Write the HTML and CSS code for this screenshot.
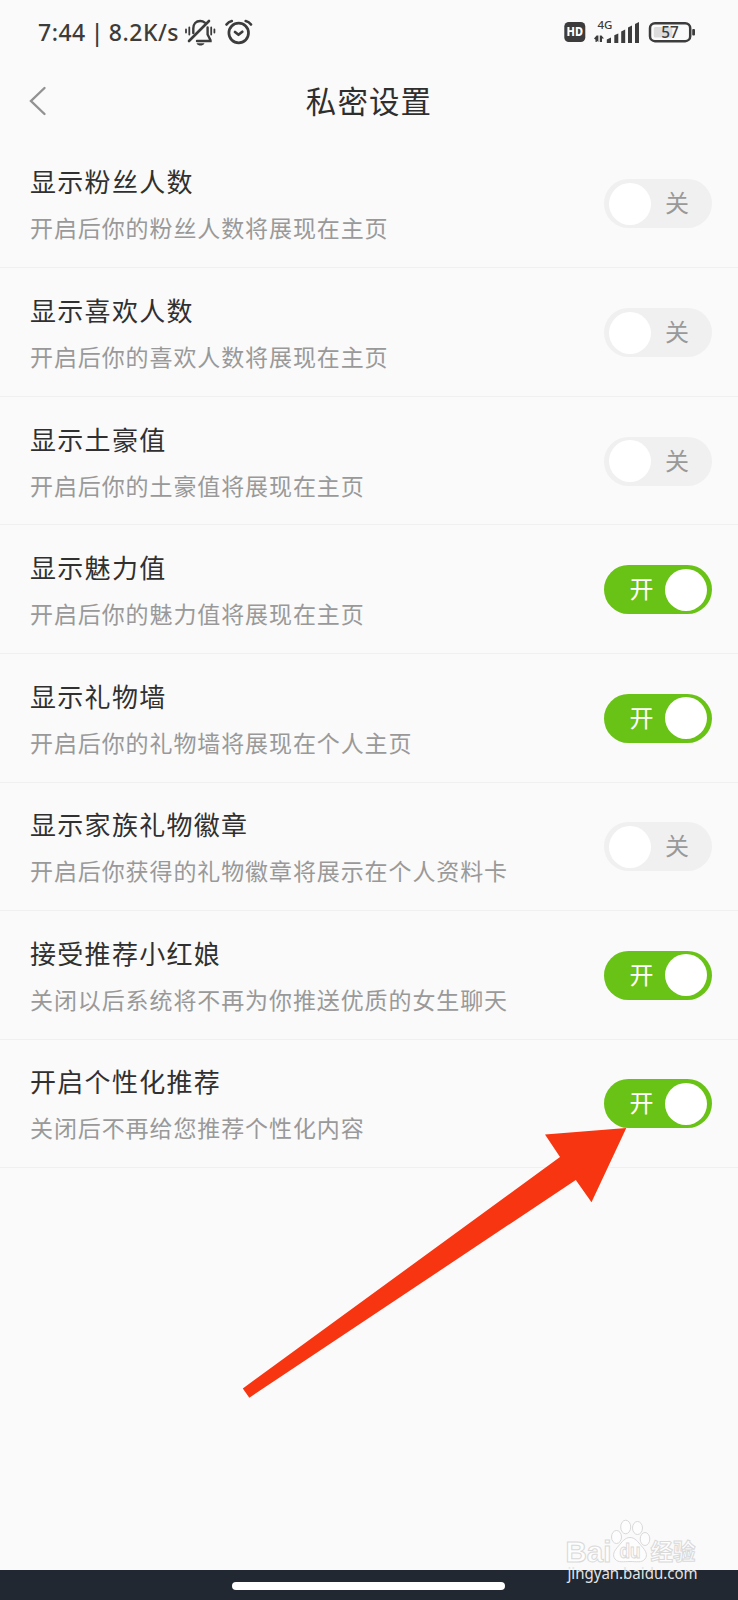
FILE: index.html
```html
<!DOCTYPE html>
<html lang="zh-CN">

<head>
    <meta charset="UTF-8">
    <meta name="viewport" content="width=device-width, initial-scale=1.0">
    <title>私密设置</title>
    <link rel="stylesheet" href="styles.css">
</head>

<body>
    <div class="phone">
        <!-- 状态栏 -->
        <div class="status">
            <span class="time">7:44 | 8.2K/s</span>
            <svg class="status-left" width="70" height="30" viewBox="184 18 70 30">
                <!-- 静音铃铛 -->
                <g fill="none" stroke="#3c3c3c" stroke-width="2.4" stroke-linecap="round">
                    <path d="M193.300 33V28.500C193.300 24 196 21 200.200 21C202 21 203.500 21.500 204.800 22.600"></path>
                    <path d="M207.600 27.500V34.500L210.500 40.200V41H197"></path>
                    <path d="M189 41L209 21" stroke-width="2.600"></path>
                    <path d="M186 29.500V32.500M189.300 27.500V34.500M211.200 27.500V34.500M214.400 29.500V32.500" stroke-width="1.800"></path>
                </g>
                <path d="M196.500 43.200H204.500C203.500 45 202 45.600 200.500 45.600C199 45.600 197.500 45 196.500 43.200Z" fill="#3c3c3c"></path>
                <!-- 闹钟 -->
                <g fill="none" stroke="#3c3c3c" stroke-width="2.700" stroke-linecap="round" stroke-linejoin="round">
                    <circle cx="238.700" cy="33" r="9.800"></circle>
                    <path d="M235 32L238.500 34.800L242.300 31.800"></path>
                    <path d="M226.500 24.500Q228.500 21.800 231.800 21M251 24.500Q249 21.800 245.700 21"></path>
                </g>
            </svg>
            <svg class="status-right" width="132" height="30" viewBox="564 18 132 30">
                <rect x="564.300" y="22" width="21" height="20" rx="4.500" fill="#3c3c3c"></rect>
                <text class="hd" x="566.500" y="36" textLength="16.500" lengthAdjust="spacingAndGlyphs">HD</text>
                <text class="net" x="597.500" y="29" textLength="15" lengthAdjust="spacingAndGlyphs">4G</text>
                <g fill="#3c3c3c">
                    <path d="M594 38.500L596.800 35.500V42H595.500V38.500ZM596.600 35.500H598.400V42L594 38.500Z"></path>
                    <path d="M599.800 35.500H601.500L604 38.500H602V42H599.800Z"></path>
                    <path d="M606.800 39.500L611 37.500V43H606.800Z"></path>
                    <path d="M614.300 35.200L618.300 33.500V43H614.300Z"></path>
                    <path d="M621.200 31.500L625.200 29.500V43H621.200Z"></path>
                    <path d="M628 27.500L632 25.500V43H628Z"></path>
                    <path d="M635 24L639 22V43H635Z"></path>
                    <rect x="692.200" y="29" width="2.800" height="6.500" rx="1"></rect>
                </g>
                <rect x="653.800" y="27" width="18.500" height="10.500" rx="1.500" fill="#dcdcdc"></rect>
                <rect x="650" y="23.200" width="40.200" height="18" rx="5" fill="none" stroke="#3c3c3c" stroke-width="2.500"></rect>
                <text class="power" x="661.300" y="37.900" textLength="17.500" lengthAdjust="spacingAndGlyphs">57</text>
            </svg>
        </div>

        <!-- 标题栏 -->
        <div class="header">
            <svg class="back" width="18" height="30" viewBox="0 0 18 30">
                <path d="M15.500 2L2 15L15.500 28" fill="none" stroke="#929292" stroke-width="2.400" stroke-linecap="round"></path>
            </svg>
            <h1>私密设置</h1>
        </div>

        <!-- 设置列表 -->
        <ul class="list">
            <li>
                <div class="text">
                    <h2>显示粉丝人数</h2>
                    <p>开启后你的粉丝人数将展现在主页</p>
                </div>
                <div class="switch"><i></i><span>关</span></div>
            </li>
            <li>
                <div class="text">
                    <h2>显示喜欢人数</h2>
                    <p>开启后你的喜欢人数将展现在主页</p>
                </div>
                <div class="switch"><i></i><span>关</span></div>
            </li>
            <li>
                <div class="text">
                    <h2>显示土豪值</h2>
                    <p>开启后你的土豪值将展现在主页</p>
                </div>
                <div class="switch"><i></i><span>关</span></div>
            </li>
            <li>
                <div class="text">
                    <h2>显示魅力值</h2>
                    <p>开启后你的魅力值将展现在主页</p>
                </div>
                <div class="switch on"><i></i><span>开</span></div>
            </li>
            <li>
                <div class="text">
                    <h2>显示礼物墙</h2>
                    <p>开启后你的礼物墙将展现在个人主页</p>
                </div>
                <div class="switch on"><i></i><span>开</span></div>
            </li>
            <li>
                <div class="text">
                    <h2>显示家族礼物徽章</h2>
                    <p>开启后你获得的礼物徽章将展示在个人资料卡</p>
                </div>
                <div class="switch"><i></i><span>关</span></div>
            </li>
            <li>
                <div class="text">
                    <h2>接受推荐小红娘</h2>
                    <p>关闭以后系统将不再为你推送优质的女生聊天</p>
                </div>
                <div class="switch on"><i></i><span>开</span></div>
            </li>
            <li>
                <div class="text">
                    <h2>开启个性化推荐</h2>
                    <p>关闭后不再给您推荐个性化内容</p>
                </div>
                <div class="switch on"><i></i><span>开</span></div>
            </li>
        </ul>

        <!-- 底部导航条 -->
        <div class="nav"><span></span></div>

        <!-- 红色箭头 -->
        <svg class="arrow" width="390" height="280" viewBox="240 1125 390 280">
            <path d="M626.300 1128L545 1134.500L560 1157L242.800 1388.500L249.300 1397.700L575.800 1180L591.500 1202.300Z" fill="#f73511"></path>
        </svg>

        <!-- 水印 -->
        <svg class="mark" width="150" height="85" viewBox="555 1515 150 85">
            <g fill="#fdfdfd" stroke="#d9d9d9" stroke-width="1">
                <ellipse cx="616.500" cy="1537" rx="5" ry="6.500"></ellipse>
                <ellipse cx="625.700" cy="1527" rx="5" ry="6.800"></ellipse>
                <ellipse cx="637.500" cy="1528" rx="5" ry="6.500"></ellipse>
                <ellipse cx="645" cy="1539" rx="4.800" ry="6.500"></ellipse>
                <path d="M630 1537.500C635 1537.500 638 1542 641.500 1546C646 1551 648 1555 645 1559C642 1563 636 1561.500 630 1561.500C624 1561.500 618 1563 615 1559C612 1555 614 1551 618.500 1546C622 1542 625 1537.500 630 1537.500Z"></path>
                <text class="bai" x="565.500" y="1561.500" textLength="46" lengthAdjust="spacingAndGlyphs">Bai</text>
                <text class="du" x="619.500" y="1558" textLength="21" lengthAdjust="spacingAndGlyphs">du</text>
                <text class="jy" x="650.500" y="1559.500" textLength="45" lengthAdjust="spacingAndGlyphs">经验</text>
            </g>
            <text class="site" x="567.500" y="1579" textLength="130" lengthAdjust="spacingAndGlyphs">jingyan.baidu.com</text>
        </svg>
    </div>
</body>

</html>
```
FILE: styles.css
```css
* {
    margin: 0;
    padding: 0;
    box-sizing: border-box;
}

body {
    background: #fafafa;
    font-family: "Noto Sans", "Noto Sans CJK SC", sans-serif;
}

ul {
    list-style: none;
}

i {
    font-style: normal;
}

svg {
    display: block;
}

.phone {
    position: relative;
    display: flex;
    flex-direction: column;
    width: 738px;
    height: 1600px;
    overflow: hidden;
}
/* 状态栏 */

.status {
    display: flex;
    align-items: center;
    height: 66px;
    padding: 0 42px 0 38px;
}

.time {
    width: 146px;
    padding-bottom: 2px;
    font-size: 23px;
    font-weight: 500;
    line-height: 30px;
    letter-spacing: .5px;
    word-spacing: -1.5px;
    color: #3c3c3c;
    white-space: nowrap;
}

.status-right {
    margin-left: auto;
}

.hd {
    font: 800 11.5px "Noto Sans", sans-serif;
    fill: #fff;
}

.net {
    font: 500 11px "Noto Sans", sans-serif;
    fill: #3c3c3c;
}

.power {
    font: 500 15.5px "Noto Sans", sans-serif;
    fill: #3c3c3c;
}
/* 标题栏 */

.header {
    display: grid;
    grid-template-columns: 60px 1fr 60px;
    align-items: center;
    height: 73.7px;
    padding-bottom: 4px;
}

.back {
    margin-left: 29px;
}

.header h1 {
    padding-bottom: 1px;
    font: 400 30.5px/44px "Noto Sans CJK SC", sans-serif;
    letter-spacing: 1.1px;
    text-align: center;
    color: #2f2f2f;
}
/* 设置列表 */

.list {
    flex: 1;
}

.list li {
    display: flex;
    justify-content: space-between;
    align-items: center;
    height: 128.57px;
    padding: 0 26px 0 30px;
    border-bottom: 1px solid #f0f0f0;
}

.text h2 {
    font: 400 26px/40px "Noto Sans CJK SC", sans-serif;
    letter-spacing: 1.3px;
    color: #303030;
}

.text p {
    margin-top: 8px;
    font: 400 23px/36px "Noto Sans CJK SC", sans-serif;
    letter-spacing: .9px;
    color: #999;
}
/* 开关 */

.switch {
    display: flex;
    align-items: center;
    width: 108.5px;
    height: 49px;
    margin-top: 1px;
    padding: 0 5px;
    border-radius: 25px;
    background: #f0f0f0;
}

.switch i {
    width: 42px;
    height: 42px;
    border-radius: 50%;
    background: #fff;
}

.switch span {
    flex: 1;
    padding: 0 0 3px 14.5px;
    font: 400 24px/36px "Noto Sans CJK SC", sans-serif;
    color: #999;
}

.on {
    flex-direction: row-reverse;
    background: #69c216;
}

.on span {
    padding-left: 21px;
    color: #fff;
}
/* 底部导航条 */

.nav {
    height: 30px;
    padding: 11.5px 0 0 232px;
    background: #222831;
}

.nav span {
    display: block;
    width: 273px;
    height: 8px;
    border-radius: 4px;
    background: #fff;
}
/* 箭头和水印盖在页面上面 */

.arrow {
    position: absolute;
    left: 240px;
    top: 1125px;
}

.mark {
    position: absolute;
    left: 555px;
    top: 1515px;
}

.bai {
    font: 700 29px "Liberation Sans", sans-serif;
}

.du {
    font: 700 20px "Liberation Sans", sans-serif;
}

.jy {
    font: 700 23px "Noto Sans CJK SC", sans-serif;
}

.site {
    font: 400 15.5px "Noto Sans", sans-serif;
    fill: #e4e4e4;
}
```
